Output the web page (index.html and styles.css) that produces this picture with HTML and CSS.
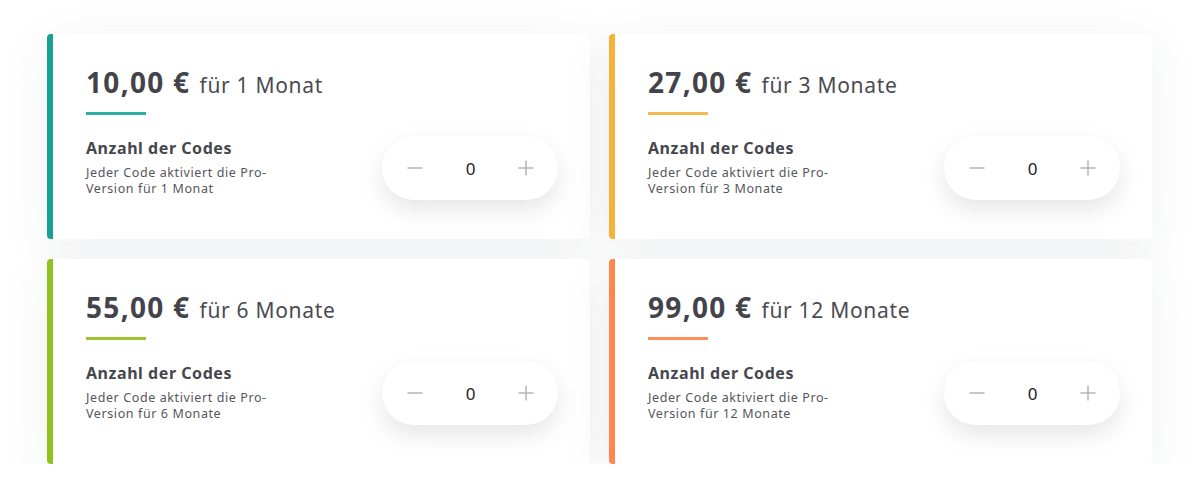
FILE: index.html
```html
<!DOCTYPE html>
<html lang="de">
<head>
<meta charset="utf-8">
<title>Codes</title>
<link rel="stylesheet" href="styles.css">
</head>
<body>
<div class="grid">
  <div class="card teal">
    <h2 class="price"><b>10,00 €</b><span>für 1 Monat</span></h2>
    <div class="bar"></div>
    <div class="row">
      <div class="info">
        <div class="label">Anzahl der Codes</div>
        <p class="desc">Jeder Code aktiviert die Pro-Version für 1 Monat</p>
      </div>
      <div class="stepper">
        <span class="btn"><svg viewBox="0 0 16 16" width="16" height="16"><path d="M0.5 8H15.5"/></svg></span>
        <span class="val">0</span>
        <span class="btn"><svg viewBox="0 0 16 16" width="16" height="16"><path d="M0.5 8H15.5M8 0.5V15.5"/></svg></span>
      </div>
    </div>
  </div>
  <div class="card yellow">
    <h2 class="price"><b>27,00 €</b><span>für 3 Monate</span></h2>
    <div class="bar"></div>
    <div class="row">
      <div class="info">
        <div class="label">Anzahl der Codes</div>
        <p class="desc">Jeder Code aktiviert die Pro-Version für 3 Monate</p>
      </div>
      <div class="stepper">
        <span class="btn"><svg viewBox="0 0 16 16" width="16" height="16"><path d="M0.5 8H15.5"/></svg></span>
        <span class="val">0</span>
        <span class="btn"><svg viewBox="0 0 16 16" width="16" height="16"><path d="M0.5 8H15.5M8 0.5V15.5"/></svg></span>
      </div>
    </div>
  </div>
  <div class="card green">
    <h2 class="price"><b>55,00 €</b><span>für 6 Monate</span></h2>
    <div class="bar"></div>
    <div class="row">
      <div class="info">
        <div class="label">Anzahl der Codes</div>
        <p class="desc">Jeder Code aktiviert die Pro-Version für 6 Monate</p>
      </div>
      <div class="stepper">
        <span class="btn"><svg viewBox="0 0 16 16" width="16" height="16"><path d="M0.5 8H15.5"/></svg></span>
        <span class="val">0</span>
        <span class="btn"><svg viewBox="0 0 16 16" width="16" height="16"><path d="M0.5 8H15.5M8 0.5V15.5"/></svg></span>
      </div>
    </div>
  </div>
  <div class="card orange">
    <h2 class="price"><b>99,00 €</b><span>für 12 Monate</span></h2>
    <div class="bar"></div>
    <div class="row">
      <div class="info">
        <div class="label">Anzahl der Codes</div>
        <p class="desc">Jeder Code aktiviert die Pro-Version für 12 Monate</p>
      </div>
      <div class="stepper">
        <span class="btn"><svg viewBox="0 0 16 16" width="16" height="16"><path d="M0.5 8H15.5"/></svg></span>
        <span class="val">0</span>
        <span class="btn"><svg viewBox="0 0 16 16" width="16" height="16"><path d="M0.5 8H15.5M8 0.5V15.5"/></svg></span>
      </div>
    </div>
  </div>
</div>
</body>
</html>
```
FILE: styles.css
```css
html, body {
  margin: 0;
  padding: 0;
  background: #ffffff;
}
body {
  font-family: "Noto Sans", "Open Sans", sans-serif;
  color: #45464d;
}
.grid {
  display: grid;
  grid-template-columns: 543px 543px;
  column-gap: 19px;
  row-gap: 20px;
  padding: 34px 0 0 47px;
}
.card {
  background: #ffffff;
  border-left: 6px solid #1ba39c;
  border-radius: 4px;
  height: 205px;
  box-sizing: border-box;
  padding: 32px 32px 0 33px;
  box-shadow: 0 10px 50px rgba(40, 50, 70, 0.07);
}
.card.teal { border-left-color: #17a096; }
.card.yellow { border-left-color: #f6b33a; }
.card.green { border-left-color: #8dc21f; }
.card.orange { border-left-color: #ff874b; }
.price {
  margin: 0;
  font-size: 28px;
  line-height: 32px;
  font-weight: 400;
  white-space: nowrap;
}
.price b {
  font-weight: 700;
  color: #43444b;
  letter-spacing: 1.3px;
}
.price span {
  margin-left: 9px;
  font-size: 21px;
  color: #4a4b52;
  letter-spacing: 0.7px;
}
.bar {
  width: 60px;
  height: 3px;
  margin-top: 11px;
  background: #2fada3;
}
.yellow .bar { background: #f6bb4f; }
.green .bar { background: #9fc431; }
.orange .bar { background: #fb8e5a; }
.row {
  display: flex;
  align-items: center;
  justify-content: space-between;
  margin-top: 21px;
}
.info {
  width: 210px;
  margin-bottom: 2px;
}
.label {
  font-size: 16px;
  line-height: 20px;
  font-weight: 700;
  color: #46474e;
  letter-spacing: 0.55px;
}
.desc {
  margin: 7px 0 0;
  font-size: 12.5px;
  line-height: 16px;
  color: #55565c;
  letter-spacing: 0.6px;
  width: 200px;
}
.stepper {
  width: 176px;
  height: 64px;
  border-radius: 32px;
  background: #ffffff;
  box-shadow: 0 10px 24px rgba(0, 0, 0, 0.1);
  display: flex;
  align-items: center;
  justify-content: space-between;
  padding: 0 24px 0 25px;
  box-sizing: border-box;
}
.btn {
  display: flex;
  width: 16px;
  height: 16px;
}
.btn svg {
  fill: none;
  stroke: #b5b5b5;
  stroke-width: 1.5;
}
.val {
  font-size: 17px;
  color: #222;
}
```
